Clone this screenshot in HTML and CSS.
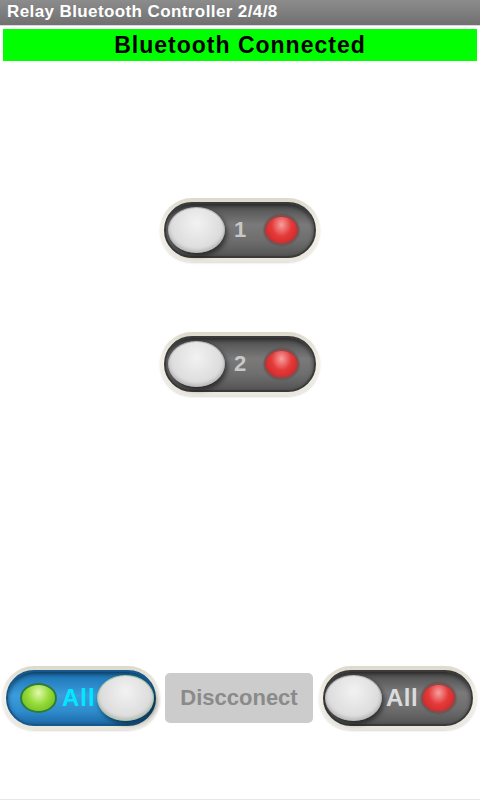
FILE: index.html
```html
<!DOCTYPE html>
<html lang="en">
<head>
    <meta charset="UTF-8">
    <meta name="viewport" content="width=device-width, initial-scale=1.0">
    <title>Relay Bluetooth Controller 2/4/8</title>
    <link rel="stylesheet" href="styles.css">
</head>
<body>

    <div class="app">
        <div class="title-bar">Relay Bluetooth Controller 2/4/8</div>

        <div class="status">Bluetooth Connected</div>

        <div class="relays">
            <div class="switch">
                <div class="track">
                    <span class="knob"></span>
                    <span class="label">1</span>
                    <span class="led red"></span>
                </div>
            </div>
            <div class="switch">
                <div class="track">
                    <span class="knob"></span>
                    <span class="label">2</span>
                    <span class="led red"></span>
                </div>
            </div>
        </div>

        <div class="bottom-row">
            <div class="switch wide">
                <div class="track on">
                    <span class="led green"></span>
                    <span class="label all-on">All</span>
                    <span class="knob"></span>
                </div>
            </div>
            <button class="disconnect">Discconect</button>
            <div class="switch wide">
                <div class="track all">
                    <span class="knob"></span>
                    <span class="label all-off">All</span>
                    <span class="led red"></span>
                </div>
            </div>
        </div>
    </div>

</body>
</html>
```
FILE: styles.css
```css
body {
    margin: 0;
    font-family: "Liberation Sans", Arial, sans-serif;
    background: #fff;
}
.app {
    width: 480px;
    height: 800px;
    display: flex;
    flex-direction: column;
    box-sizing: border-box;
    border-bottom: 1px solid #e6e6e6;
}
.title-bar {
    height: 26px;
    line-height: 24px;
    padding-left: 7px;
    color: #fff;
    font-weight: bold;
    font-size: 17px;
    letter-spacing: 0.4px;
    background: linear-gradient(#8c8c8c, #707070);
    border-bottom: 1px solid #d8d8d8;
    box-sizing: border-box;
    white-space: nowrap;
}
.status {
    margin: 3px 3px 0 3px;
    height: 32px;
    line-height: 33px;
    background: #00ff00;
    color: #000;
    text-align: center;
    font-weight: bold;
    font-size: 23px;
    letter-spacing: 1px;
}
.relays {
    display: flex;
    flex-direction: column;
    align-items: center;
    gap: 70px;
    padding-top: 137px;
}

/* toggle switch */
.switch {
    width: 160px;
    height: 64px;
    box-sizing: border-box;
    padding: 4px;
    border-radius: 32px;
    background: linear-gradient(#ddd9cc, #f3f1ea 45%, #e9e6dc);
    box-shadow: 0 1px 2px rgba(0, 0, 0, 0.15);
}
.switch.wide {
    width: 158px;
}
.track {
    height: 100%;
    box-sizing: border-box;
    border-radius: 28px;
    border: 2px solid #3a3a3a;
    background: linear-gradient(#4c4c4c, #7a7a7a 40%, #6e6e6e 70%, #555);
    box-shadow: inset 0 2px 4px rgba(0, 0, 0, 0.5);
    display: flex;
    align-items: center;
    padding-left: 2px;
}
.track .label {
    margin-left: 9px;
}
.track .label + .led {
    margin-left: 18px;
}
.track.on {
    border-color: #16588c;
    background: linear-gradient(#1a6fb0, #3b9ddd 45%, #2f8ccd 75%, #1c6aa8);
    padding-left: 12px;
}
.track.on .label {
    margin-left: 5px;
}
.track.on .knob {
    margin-left: 1px;
    border-color: #a9c7a0;
}
.track.all {
    padding-left: 0;
}
.track.all .label {
    margin-left: 4px;
}
.track.all .label + .led {
    margin-left: 3px;
}
.knob {
    width: 57px;
    height: 46px;
    flex-shrink: 0;
    border-radius: 50%;
    box-sizing: border-box;
    border: 1px solid #b9b9b9;
    background: radial-gradient(ellipse at 50% 35%, #f2f2f2, #dedede 60%, #c9c9c9);
    box-shadow: 2px 3px 5px rgba(0, 0, 0, 0.55), inset 0 -2px 3px rgba(0, 0, 0, 0.12);
}
.led {
    width: 35px;
    height: 30px;
    flex-shrink: 0;
    border-radius: 50%;
    box-sizing: border-box;
}
.led.red {
    background: radial-gradient(ellipse at 50% 30%, #f7a0a0, #e53a3a 45%, #c42020);
    border: 2px solid #8a4a4a;
    box-shadow: 0 0 2px rgba(0, 0, 0, 0.4);
}
.led.green {
    width: 37px;
    background: radial-gradient(ellipse at 50% 30%, #e4f8b0, #96dc3a 45%, #62b21a);
    border: 2px solid #2f7a3a;
}
.label {
    font-weight: bold;
    font-size: 22px;
    line-height: 1;
    color: #c8c8c8;
}
.all-on {
    color: #00e8ff;
    font-size: 24px;
    letter-spacing: 1px;
}
.all-off {
    color: #dcdcdc;
    font-size: 24px;
    letter-spacing: 0.5px;
}

.bottom-row {
    margin-top: auto;
    margin-bottom: 69px;
    display: flex;
    align-items: center;
    gap: 5px;
    padding-left: 2px;
}
.disconnect {
    width: 148px;
    height: 50px;
    border: none;
    border-radius: 5px;
    background: #cccccc;
    color: #8a8a8a;
    font-family: "Liberation Sans", Arial, sans-serif;
    font-weight: bold;
    font-size: 22px;
    padding: 0;
    margin-right: 1px;
}
```
